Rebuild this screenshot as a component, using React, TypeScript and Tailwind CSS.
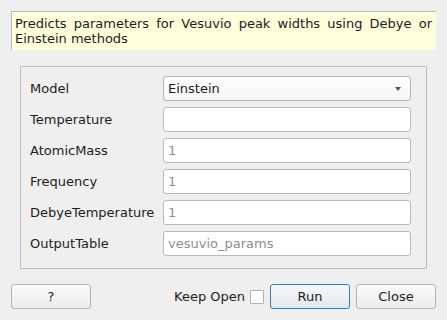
import React from 'react';

const rows: { label: string; kind: 'combo' | 'input'; value?: string; placeholder?: string }[] = [
    { label: 'Model', kind: 'combo', value: 'Einstein' },
    { label: 'Temperature', kind: 'input' },
    { label: 'AtomicMass', kind: 'input', placeholder: '1' },
    { label: 'Frequency', kind: 'input', placeholder: '1' },
    { label: 'DebyeTemperature', kind: 'input', placeholder: '1' },
    { label: 'OutputTable', kind: 'input', placeholder: 'vesuvio_params' },
];

const ComboBox = ({ value }: { value: string }) => (
    <div className="flex-1 h-[25px] flex items-center justify-between pl-[4px] pr-[9px] border border-[#b5b5b5] rounded-[3px] bg-gradient-to-b from-[#ffffff] to-[#f6f6f6]">
        <span>{value}</span>
        <svg width="6" height="4" viewBox="0 0 6 4">
            <path d="M0 0 L6 0 L3 4 Z" fill="#555" />
        </svg>
    </div>
);

const TextField = ({ placeholder }: { placeholder?: string }) => (
    <div className="flex-1 h-[25px] flex items-center pl-[4px] border border-[#b9b9b9] rounded-[3px] bg-white">
        {placeholder && <span className="text-[#8e8e8e]">{placeholder}</span>}
    </div>
);

const Button = ({ children, primary = false }: { children: React.ReactNode; primary?: boolean }) => (
    <button
        className={
            primary
                ? 'w-[80px] h-[25px] rounded-[3px] border border-[#3f79ad] bg-gradient-to-b from-[#f6f8fa] to-[#e3e8ed]'
                : 'w-[80px] h-[25px] rounded-[3px] border border-[#b4b4b4] bg-gradient-to-b from-[#fbfbfb] to-[#ececec]'
        }
    >
        {children}
    </button>
);

export default function App() {
    return (
        <div
            className="w-[447px] h-[320px] bg-[#efefef] text-[13px] leading-[15px] text-[#1c1c1c] px-[11px] pt-[11px] flex flex-col"
            style={{ fontFamily: '"DejaVu Sans", sans-serif' }}
        >
            {/* tooltip-like description */}
            <div className="h-[39px] bg-[#ffffdc] border-l border-t border-[#b8b8b8] pl-[3px] pr-[4px] pt-[4px] text-justify [text-align-last:left]">
                Predicts parameters for Vesuvio peak widths using Debye or Einstein methods
            </div>

            {/* property group */}
            <div className="mt-[16px] mx-[9px] h-[203px] border border-[#bdbdbd] rounded-[1px] pl-[9px] pr-[15px] pt-[9px] flex flex-col gap-[6px]">
                {rows.map((row) => (
                    <div key={row.label} className="flex items-center h-[25px]">
                        <span className="w-[133px]">{row.label}</span>
                        {row.kind === 'combo' ? (
                            <ComboBox value={row.value ?? ''} />
                        ) : (
                            <TextField placeholder={row.placeholder} />
                        )}
                    </div>
                ))}
            </div>

            {/* buttons */}
            <div className="mt-[15px] flex items-center">
                <Button>?</Button>
                <div className="flex-1" />
                <span className="mr-[5px]">Keep Open</span>
                <div className="w-[14px] h-[14px] border border-[#b0b0b0] bg-white rounded-[1px] mr-[6px]" />
                <Button primary>Run</Button>
                <div className="w-[6px]" />
                <Button>Close</Button>
            </div>
        </div>
    );
}
